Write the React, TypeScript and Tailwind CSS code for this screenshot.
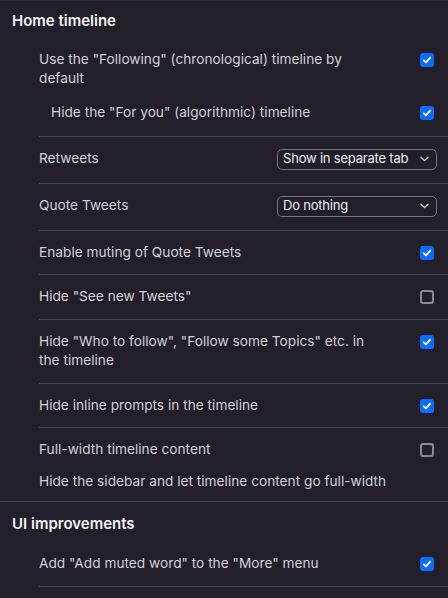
import React from "react";

const Box = ({ checked }: { checked: boolean }) =>
  checked ? (
    <div className="w-[14px] h-[14px] rounded-[3px] bg-[#0b6cfd] flex items-center justify-center shrink-0">
      <svg width="10" height="10" viewBox="0 0 10 10">
        <path d="M1.8 5.3 L4 7.4 L8.2 2.6" stroke="white" strokeWidth="1.8" fill="none" strokeLinecap="round" strokeLinejoin="round" />
      </svg>
    </div>
  ) : (
    <div className="w-[14px] h-[14px] rounded-[3px] border-2 border-[#8b8892] shrink-0" />
  );

const Select = ({ value }: { value: string }) => (
  <div className="w-[160px] h-[21px] border border-[#77747e] rounded-[5px] flex items-center justify-between pl-[5px] pr-[7px] text-[13px] tracking-[-0.2px] whitespace-nowrap text-[#ededf0] shrink-0">
    <span>{value}</span>
    <svg width="9" height="6" viewBox="0 0 9 6" className="shrink-0">
      <path d="M1 1.2 L4.5 4.6 L8 1.2" stroke="#d8d6dc" strokeWidth="1.3" fill="none" strokeLinecap="round" strokeLinejoin="round" />
    </svg>
  </div>
);

const CheckRow = ({ label, checked }: { label: string; checked: boolean }) => (
  <div className="flex items-start justify-between pr-[14px] py-[12px] border-b border-[#46434e]">
    <span className="max-w-[330px]">{label}</span>
    <div className="mt-[3px]"><Box checked={checked} /></div>
  </div>
);

const SelectRow = ({ label, value }: { label: string; value: string }) => (
  <div className="flex items-center justify-between pr-[11px] pt-[12px] pb-[13px] border-b border-[#46434e]">
    <span>{label}</span>
    <Select value={value} />
  </div>
);

export default function App() {
  return (
    <div className="w-[448px] h-[598px] overflow-hidden bg-[#221f2a] font-['Inter',sans-serif] text-[13.7px] leading-[19.5px] text-[#d2d0d7]">
      <div className="border-t border-[#2c2934]">
        <div className="pl-[12px] pt-[10px] pb-[8px] text-[15px] font-semibold text-[#f2f2f4] leading-[19px]">Home timeline</div>
        <div className="pl-[39px]">
          <div className="pb-[13px] border-b border-[#46434e]">
            <div className="flex items-start justify-between pr-[14px] pt-[12px]">
              <span className="max-w-[330px] leading-[18.5px]">Use the "Following" (chronological) timeline by default</span>
              <div className="mt-[3px]"><Box checked /></div>
            </div>
            <div className="flex items-center justify-between pr-[14px] pl-[12px] mt-[16px]">
              <span>Hide the "For you" (algorithmic) timeline</span>
              <Box checked />
            </div>
          </div>
          <SelectRow label="Retweets" value="Show in separate tab" />
          <SelectRow label="Quote Tweets" value="Do nothing" />
          <CheckRow label="Enable muting of Quote Tweets" checked />
          <CheckRow label={'Hide "See new Tweets"'} checked={false} />
          <CheckRow label={'Hide "Who to follow", "Follow some Topics" etc. in the timeline'} checked />
          <CheckRow label="Hide inline prompts in the timeline" checked />
        </div>
        <div className="border-b border-[#46434e]">
          <div className="pl-[39px] pt-[12px] pb-[10px]">
            <div className="flex items-center justify-between pr-[14px]">
              <span>Full-width timeline content</span>
              <Box checked={false} />
            </div>
            <div className="mt-[12px]">Hide the sidebar and let timeline content go full-width</div>
          </div>
        </div>
      </div>
      <div>
        <div className="pl-[12px] pt-[12px] pb-[9px] text-[15px] font-semibold text-[#f2f2f4] leading-[19px]">UI improvements</div>
        <div className="pl-[39px]">
          <CheckRow label={'Add "Add muted word" to the "More" menu'} checked />
        </div>
      </div>
    </div>
  );
}
